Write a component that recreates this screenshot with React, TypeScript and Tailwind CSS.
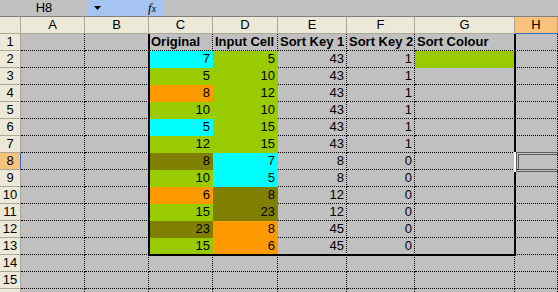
import React from "react";

type Fill = "c" | "l" | "o" | "v" | "";

const fillClass: Record<string, string> = {
  c: "bg-[#00ffff] border-[#00ffff]",
  l: "bg-[#99cc00] border-[#99cc00]",
  o: "bg-[#ff9900] border-[#ff9900]",
  v: "bg-[#808000] border-[#808000]",
  "": "border-black",
};

const cols = ["A", "B", "C", "D", "E", "F", "G", "H"];

// [original, fill, input, fill, key1, key2, sortColour fill]
const data: [number, Fill, number, Fill, number, number, Fill][] = [
  [7, "c", 5, "l", 43, 1, "l"],
  [5, "l", 10, "l", 43, 1, ""],
  [8, "o", 12, "l", 43, 1, ""],
  [10, "l", 10, "l", 43, 1, ""],
  [5, "c", 15, "l", 43, 1, ""],
  [12, "l", 15, "l", 43, 1, ""],
  [8, "v", 7, "c", 8, 0, ""],
  [10, "l", 5, "c", 8, 0, ""],
  [6, "o", 8, "v", 12, 0, ""],
  [15, "l", 23, "v", 12, 0, ""],
  [23, "v", 8, "o", 45, 0, ""],
  [15, "l", 6, "o", 45, 0, ""],
];

function Cell({
  fill = "",
  children,
  bold,
  left,
}: {
  fill?: Fill;
  children?: React.ReactNode;
  bold?: boolean;
  left?: boolean;
}) {
  return (
    <div
      className={`h-[17px] border-r border-b border-dotted overflow-hidden whitespace-nowrap leading-[16px] ${fillClass[fill]} ${
        left ? "text-left pl-[2px]" : "text-right pr-[2px]"
      } ${bold ? "font-bold" : ""}`}
    >
      {children}
    </div>
  );
}

function RowHead({ n }: { n: number }) {
  const sel = n === 8;
  return (
    <div
      className={`h-[17px] border-r border-b border-[#aca899] text-center leading-[16px] ${
        sel ? "bg-[#f9c27c] border-r-[#316ac5]" : "bg-[#ece9d8]"
      }`}
    >
      {n < 16 ? n : ""}
    </div>
  );
}

export default function App() {
  const rows = Array.from({ length: 16 }, (_, i) => i + 1);

  return (
    <div className="w-[558px] h-[292px] overflow-hidden bg-[#c0c0c0] text-[13px] text-black font-['Liberation_Sans',Arial,sans-serif]">
      {/* formula bar */}
      <div className="h-[17px] flex bg-[#c0c0c0] border-b border-[#808080]">
        <div className="w-[88px] text-center leading-[15px]">H8</div>
        <div className="w-[76px] bg-[#a6c4f2] flex items-center">
          <svg className="ml-[6px]" width="7" height="4" viewBox="0 0 7 4">
            <path d="M0 0h7L3.5 4z" fill="#000" />
          </svg>
          <span className="ml-[47px] italic font-['Liberation_Serif',serif] text-[13px] leading-[15px]">
            f<span className="text-[10px]">x</span>
          </span>
        </div>
        <div className="flex-1" />
      </div>

      <div className="relative">
        <div className="grid grid-cols-[21px_64px_64px_64px_65px_69px_68px_100px_1fr]">
          {/* column headers */}
          <div className="h-[17px] bg-[#ece9d8] border-r border-b border-[#aca899]" />
          {cols.map((c) => (
            <div
              key={c}
              className={`h-[17px] border-r border-b text-center leading-[16px] ${
                c === "H"
                  ? "bg-[#f9c27c] border-b-[#316ac5] border-r-[#aca899]"
                  : "bg-[#ece9d8] border-[#aca899]"
              }`}
            >
              {c}
            </div>
          ))}

          {rows.map((r) => {
            const d = r >= 2 && r <= 13 ? data[r - 2] : null;
            return (
              <React.Fragment key={r}>
                <RowHead n={r} />
                <Cell />
                <Cell />
                {r === 1 ? (
                  <>
                    <Cell bold left>Original</Cell>
                    <Cell bold left>Input Cell</Cell>
                    <Cell bold left>Sort Key 1</Cell>
                    <Cell bold left>Sort Key 2</Cell>
                    <Cell bold left>Sort Colour</Cell>
                  </>
                ) : d ? (
                  <>
                    <Cell fill={d[1]}>{d[0]}</Cell>
                    <Cell fill={d[3]}>{d[2]}</Cell>
                    <Cell>{d[4]}</Cell>
                    <Cell>{d[5]}</Cell>
                    <Cell fill={d[6]} />
                  </>
                ) : (
                  <>
                    <Cell />
                    <Cell />
                    <Cell />
                    <Cell />
                    <Cell />
                  </>
                )}
                <Cell />
              </React.Fragment>
            );
          })}
        </div>

        {/* range border C1:G13 */}
        <div className="absolute left-[148px] top-[17px] w-[368px] h-[222px] border-l-2 border-r-2 border-b-2 border-black pointer-events-none" />

        {/* active cell H8 */}
        <div className="absolute left-[514px] top-[135px] w-[2px] h-[20px] bg-white" />
        <div className="absolute left-[516px] top-[135px] w-[50px] h-[20px] border-[3px] border-double border-[#5c5c5c]" />
      </div>
    </div>
  );
}
